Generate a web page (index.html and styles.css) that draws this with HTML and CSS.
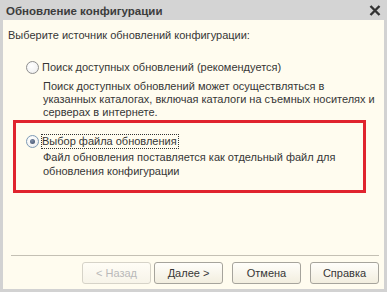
FILE: index.html
```html
<!DOCTYPE html>
<html lang="ru">
<head>
<meta charset="utf-8">
<title>Обновление конфигурации</title>
<link rel="stylesheet" href="styles.css">
</head>
<body>
<div class="window">
  <div class="titlebar">
    <span class="title">Обновление конфигурации</span>
    <svg class="close" width="12" height="11" viewBox="0 0 12 11"><path d="M1.5 1 L10.5 10 M10.5 1 L1.5 10" stroke="#333" stroke-width="2.4" fill="none"/></svg>
  </div>
  <div class="content">
    <div class="intro">Выберите источник обновлений конфигурации:</div>
    <div class="option option-first">
      <div class="radio-row">
        <span class="radio"></span>
        <span class="label">Поиск доступных обновлений (рекомендуется)</span>
      </div>
      <div class="desc">Поиск доступных обновлений может осуществляться в<br>указанных каталогах, включая каталоги на съемных носителях и<br>серверах в интернете.</div>
    </div>
    <div class="highlight">
      <div class="option">
        <div class="radio-row">
          <span class="radio checked"></span>
          <span class="label focused">Выбор файла обновления</span>
        </div>
        <div class="desc">Файл обновления поставляется как отдельный файл для<br>обновления конфигурации</div>
      </div>
    </div>
    <div class="spacer"></div>
    <div class="separator"></div>
    <div class="buttons">
      <button class="btn disabled">&lt; Назад</button>
      <button class="btn next">Далее &gt;</button>
      <button class="btn gap">Отмена</button>
      <button class="btn gap">Справка</button>
    </div>
  </div>
</div>
</body>
</html>
```
FILE: styles.css
```css
html, body {
  margin: 0;
  padding: 0;
}
body {
  width: 387px;
  height: 292px;
  overflow: hidden;
  font-family: "Liberation Sans", Arial, sans-serif;
  font-size: 11px;
  color: #363636;
}
.window {
  width: 387px;
  height: 292px;
  background: #d2d2d2;
  display: flex;
  flex-direction: column;
}
.titlebar {
  height: 20px;
  flex: none;
  display: flex;
  align-items: center;
  justify-content: space-between;
  padding: 0 6px 0 6px;
  background: #d4d4d4;
}
.title {
  font-weight: bold;
  font-size: 11.5px;
  color: #3c3c3c;
  padding-top: 1px;
}
.close {
  display: block;
  margin-top: 1px;
}
.content {
  flex: 1;
  margin: 0 3px 3px 3px;
  background: #fffcef;
  display: flex;
  flex-direction: column;
  padding: 8px 0 0 5px;
  white-space: nowrap;
}
.intro {
  line-height: 14px;
}
.option-first {
  margin-top: 17px;
  margin-left: 18px;
}
.radio-row {
  display: flex;
  align-items: center;
  height: 16px;
}
.radio {
  width: 11px;
  height: 11px;
  border: 1px solid #8e8e8e;
  border-radius: 50%;
  background: radial-gradient(circle at 40% 35%, #ffffff 0%, #f4f4f4 60%, #e2e2e2 100%);
  flex: none;
  margin-right: 2px;
  position: relative;
}
.radio.checked {
  border-color: #7d9ab6;
}
.radio.checked::after {
  content: "";
  position: absolute;
  left: 3px;
  top: 3px;
  width: 5px;
  height: 5px;
  border-radius: 50%;
  background: radial-gradient(circle at 40% 35%, #7f8fa8 0%, #3b4a66 100%);
}
.label {
  line-height: 13px;
  border: 1px solid transparent;
  padding: 0 1px 0 0;
}
.label.focused {
  border: 1px dotted #333;
}
.desc {
  margin-top: 5px;
  margin-left: 17px;
  line-height: 13px;
}
.highlight {
  margin-top: 1px;
  margin-left: 5px;
  width: 337px;
  border: 3px solid #e0242e;
  padding: 10px 0 12px 10px;
}
.highlight .desc {
  margin-top: 1px;
  line-height: 14px;
}
.spacer {
  flex: 1;
}
.separator {
  height: 1px;
  background: #c4c0b4;
  margin: 0 5px 0 3px;
}
.buttons {
  display: flex;
  justify-content: flex-end;
  padding: 6px 5px 5px 0;
}
.btn {
  width: 69px;
  height: 22px;
  font-family: "Liberation Sans", Arial, sans-serif;
  font-size: 11px;
  color: #363636;
  border: 1px solid #a6a49c;
  border-radius: 3px;
  background: linear-gradient(#fffefa, #f2eedf);
  padding: 0;
}
.btn.disabled {
  color: #b9b9b9;
  border-color: #d6d3c8;
  background: linear-gradient(#fffdf6, #f7f4e9);
}
.btn.next {
  margin-left: 3px;
}
.btn.gap {
  margin-left: 9px;
}
```
